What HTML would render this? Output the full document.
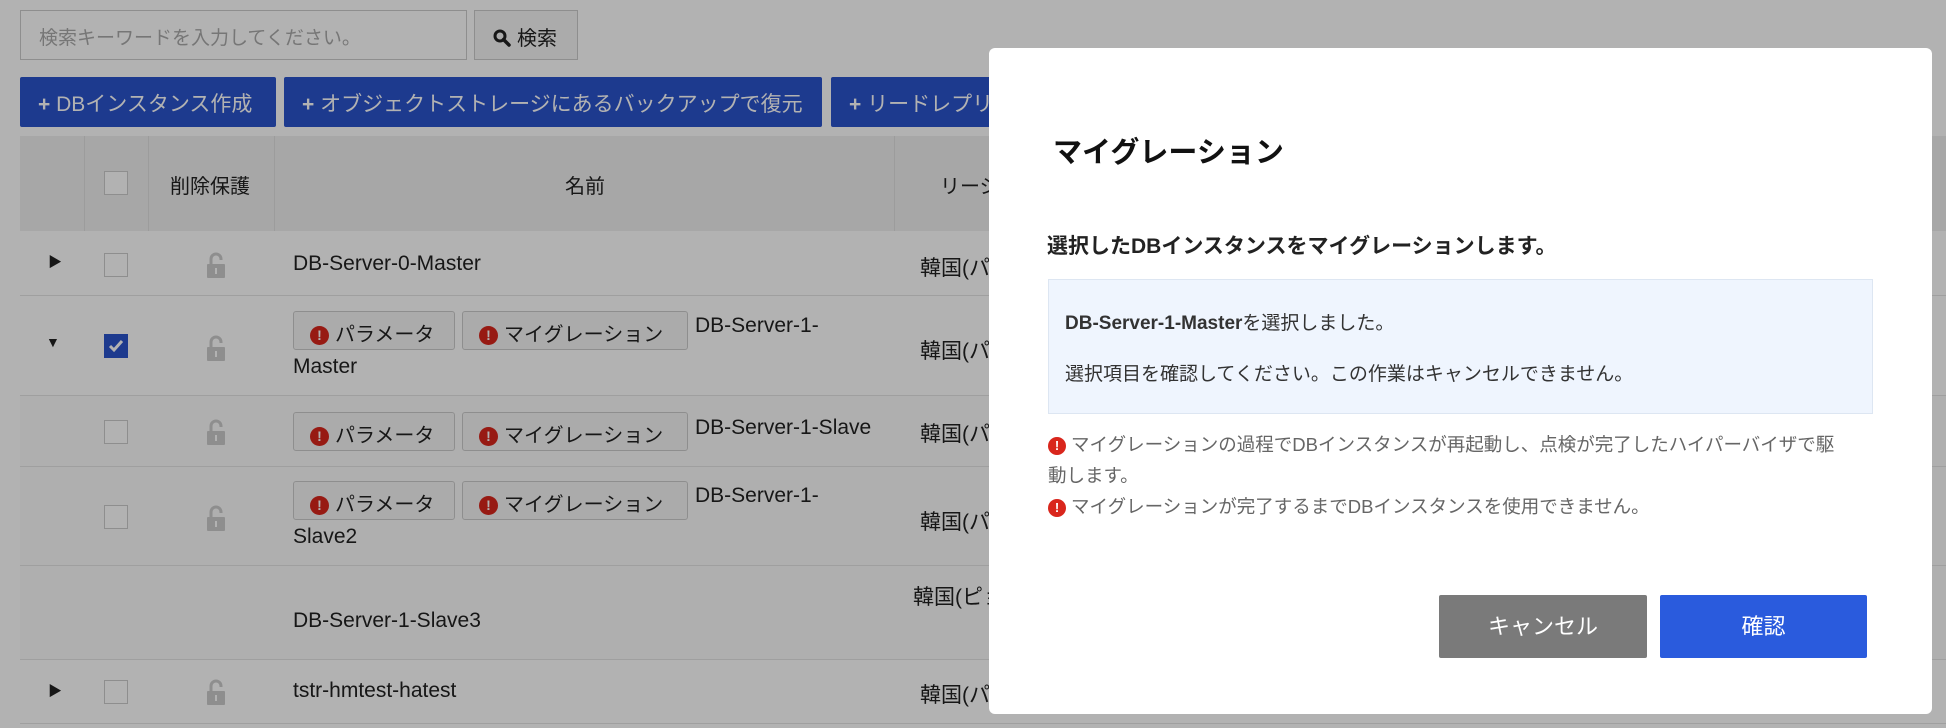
<!DOCTYPE html>
<html><head><meta charset="utf-8"><style>
*{box-sizing:border-box;margin:0;padding:0}
body{width:1946px;height:728px;overflow:hidden;background:#fff;font-family:"Liberation Sans","Noto Sans CJK JP",sans-serif;position:relative;color:#222}
.abs{position:absolute}
.inp{left:20px;top:10px;width:447px;height:50px;border:1px solid #ccc;background:#fff;font-size:19px;color:#aaa;padding:12px 18px}
.sbtn{left:474px;top:10px;width:104px;height:50px;border:1px solid #ccc;background:#f5f5f5;font-size:20px;padding:11px 0 0 18px}
.bb{top:77px;height:50px;background:#2a53cc;color:#fff;font-size:21px;padding:11px 0 0 18px;border-radius:2px;white-space:nowrap;overflow:hidden}
.hdr{left:20px;top:136px;width:1926px;height:95px;background:#f0f0f0}
.row{left:20px;width:1926px;border-bottom:1px solid #e4e4e4;background:#fff}
.vl{position:absolute;top:0;bottom:0;width:1px;background:#e8e8e8}
.cb{position:absolute;left:84px;width:24px;height:24px;border:1px solid #ccc;background:#fff}
.lock{position:absolute;left:186px;width:20px;height:28px}
.txt{position:absolute;font-size:21px;color:#222;white-space:nowrap}
.tag{position:absolute;height:39px;border:1px solid #ccc;background:#f5f5f5;border-radius:3px;font-size:20px;padding:6px 0 0 16px;white-space:nowrap}
.ex{display:inline-block;width:19px;height:19px;border-radius:50%;background:#d9261c;color:#fff;font-size:14px;font-weight:bold;text-align:center;line-height:19px;vertical-align:1px;margin-right:6px}
.ov{left:0;top:0;width:1946px;height:728px;background:rgba(0,0,0,0.3)}
.modal{left:989px;top:48px;width:943px;height:666px;background:#fff;border-radius:6px}
</style></head><body>
<div class="abs inp">検索キーワードを入力してください。</div>
<div class="abs sbtn"><svg width="18" height="18" viewBox="0 0 18 18" style="vertical-align:-2px;margin-right:6px"><circle cx="7" cy="7" r="5" fill="none" stroke="#222" stroke-width="3"/><path d="M10.5 10.5L16 16" stroke="#222" stroke-width="3.5" stroke-linecap="round"/></svg>検索</div>
<div class="abs bb" style="left:20px;width:256px"><b>+</b> DBインスタンス作成</div>
<div class="abs bb" style="left:284px;width:538px"><b>+</b> オブジェクトストレージにあるバックアップで復元</div>
<div class="abs bb" style="left:831px;width:300px"><b>+</b> リードレプリカ作成</div>
<div class="abs hdr">
 <div class="vl" style="left:64px;background:#e0e0e0"></div><div class="vl" style="left:128px;background:#e0e0e0"></div><div class="vl" style="left:254px;background:#e0e0e0"></div><div class="vl" style="left:874px;background:#e0e0e0"></div>
 <div class="cb" style="left:84px;top:35px"></div>
 <div class="txt" style="left:150px;top:34px;font-size:20px">削除保護</div>
 <div class="txt" style="left:545px;top:34px;font-size:20px">名前</div>
 <div class="txt" style="left:920px;top:34px;font-size:20px">リージョン</div>
</div>
<svg width="0" height="0" style="position:absolute"><defs><g id="lk"><path d="M5 13V8a5 5 0 0 1 10 0v1" fill="none" stroke="#ccc" stroke-width="3"/><rect x="1" y="13" width="18" height="14" rx="1" fill="#ccc"/><rect x="9" y="17" width="2" height="6" fill="#fff"/></g></defs></svg>
<div class="abs row" style="top:231px;height:65px">
 <div class="txt" style="left:28px;top:21px;font-size:14px">▶</div>
 <div class="cb" style="left:84px;top:22px"></div>
 <svg class="lock" style="top:20px" viewBox="0 0 20 28"><use href="#lk"/></svg>
 <div class="txt" style="left:273px;top:21px">DB-Server-0-Master</div>
 <div class="txt" style="left:900px;top:21px">韓国(パンギョ)</div>
</div>
<div class="abs row" style="top:296px;height:100px">
 <div class="txt" style="left:26px;top:38px;font-size:14px">▼</div>
 <div class="cb" style="left:84px;top:38px;background:#2a53cc;border-color:#2a53cc"><svg width="22" height="22" viewBox="0 0 22 22"><path d="M5 11l4 4 8-9" fill="none" stroke="#fff" stroke-width="3"/></svg></div>
 <svg class="lock" style="top:38px" viewBox="0 0 20 28"><use href="#lk"/></svg>
 <div class="tag" style="left:273px;top:15px;width:162px"><span class="ex">!</span>パラメータ</div>
 <div class="tag" style="left:442px;top:15px;width:226px"><span class="ex">!</span>マイグレーション</div>
 <div class="txt" style="left:675px;top:18px">DB-Server-1-</div>
 <div class="txt" style="left:273px;top:59px">Master</div>
 <div class="txt" style="left:900px;top:39px">韓国(パンギョ)</div>
</div>
<div class="abs row" style="top:396px;height:71px;background:#fbfbfb">
 <div class="cb" style="left:84px;top:24px"></div>
 <svg class="lock" style="top:22px" viewBox="0 0 20 28"><use href="#lk"/></svg>
 <div class="tag" style="left:273px;top:16px;width:162px"><span class="ex">!</span>パラメータ</div>
 <div class="tag" style="left:442px;top:16px;width:226px"><span class="ex">!</span>マイグレーション</div>
 <div class="txt" style="left:675px;top:20px">DB-Server-1-Slave</div>
 <div class="txt" style="left:900px;top:22px">韓国(パンギョ)</div>
</div>
<div class="abs row" style="top:467px;height:99px;background:#fbfbfb">
 <div class="cb" style="left:84px;top:38px"></div>
 <svg class="lock" style="top:37px" viewBox="0 0 20 28"><use href="#lk"/></svg>
 <div class="tag" style="left:273px;top:14px;width:162px"><span class="ex">!</span>パラメータ</div>
 <div class="tag" style="left:442px;top:14px;width:226px"><span class="ex">!</span>マイグレーション</div>
 <div class="txt" style="left:675px;top:17px">DB-Server-1-</div>
 <div class="txt" style="left:273px;top:58px">Slave2</div>
 <div class="txt" style="left:900px;top:39px">韓国(パンギョ)</div>
</div>
<div class="abs row" style="top:566px;height:94px;background:#fbfbfb">
 <div class="txt" style="left:273px;top:43px">DB-Server-1-Slave3</div>
 <div class="txt" style="left:893px;top:15px">韓国(ピョンチョン)</div>
</div>
<div class="abs row" style="top:660px;height:64px">
 <div class="txt" style="left:28px;top:21px;font-size:14px">▶</div>
 <div class="cb" style="left:84px;top:20px"></div>
 <svg class="lock" style="top:18px" viewBox="0 0 20 28"><use href="#lk"/></svg>
 <div class="txt" style="left:273px;top:19px">tstr-hmtest-hatest</div>
 <div class="txt" style="left:900px;top:19px">韓国(パンギョ)</div>
</div>
<div class="abs ov"></div>
<div class="abs modal">
 <div class="abs" style="left:64px;top:81px;font-size:29px;font-weight:bold;color:#111">マイグレーション</div>
 <div class="abs" style="left:58px;top:182px;font-size:21px;font-weight:bold;color:#222">選択したDBインスタンスをマイグレーションします。</div>
 <div class="abs" style="left:59px;top:231px;width:825px;height:135px;background:#eff5fe;border:1px solid #dde6f2"></div>
 <div class="abs" style="left:76px;top:260px;font-size:19px;color:#333"><b>DB-Server-1-Master</b>を選択しました。</div>
 <div class="abs" style="left:76px;top:311px;font-size:19px;color:#333">選択項目を確認してください。この作業はキャンセルできません。</div>
 <div class="abs" style="left:59px;top:381px;width:795px;font-size:18.5px;line-height:31px;color:#666"><span class="ex" style="width:18px;height:18px;line-height:18px;font-size:13px;margin-right:5px">!</span>マイグレーションの過程でDBインスタンスが再起動し、点検が完了したハイパーバイザで駆動します。<br><span class="ex" style="width:18px;height:18px;line-height:18px;font-size:13px;margin-right:5px">!</span>マイグレーションが完了するまでDBインスタンスを使用できません。</div>
 <div class="abs" style="left:450px;top:547px;width:208px;height:63px;background:#7a7a7a;color:#fff;font-size:22px;text-align:center;line-height:63px;border-radius:2px">キャンセル</div>
 <div class="abs" style="left:671px;top:547px;width:207px;height:63px;background:#2a5bdd;color:#fff;font-size:22px;text-align:center;line-height:63px;border-radius:2px">確認</div>
</div>
</body></html>
